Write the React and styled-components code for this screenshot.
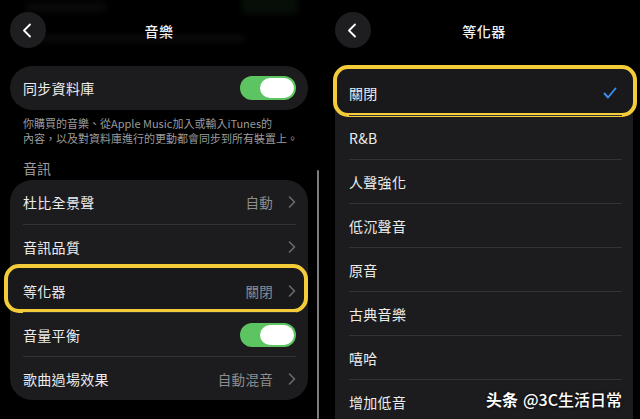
import React from 'react';
import styled, { createGlobalStyle } from 'styled-components';

const GlobalStyle = createGlobalStyle`
  html, body {
    margin: 0;
    padding: 0;
    background: #000;
  }
  body {
    font-family: "Noto Sans CJK TC", "Noto Sans", sans-serif;
    -webkit-font-smoothing: antialiased;
  }
`;

const Screen = styled.div`
  position: relative;
  display: flex;
  width: 640px;
  height: 419px;
  overflow: hidden;
  background: #000;
`;

const Panel = styled.section`
  position: relative;
  flex: none;
  width: 320px;
  box-sizing: border-box;
  padding: 12px ${({ $side }) => ($side === 'right' ? '7px 0 15px' : '12px 0 10px')};
  overflow: hidden;
`;

/* faint blurred content scrolled under the header */
const Ghost = styled.div`
  position: absolute;
  left: 0;
  right: 0;
  top: 0;
  height: 50px;
  filter: blur(3px);
  opacity: 0.3;
  pointer-events: none;
`;

const GhostBar = styled.div`
  position: absolute;
  left: ${({ $x }) => $x}px;
  top: ${({ $y }) => $y}px;
  width: ${({ $w }) => $w}px;
  height: ${({ $h }) => $h}px;
  border-radius: 3px;
  background: ${({ $c }) => $c || '#2a2a2a'};
`;

const Header = styled.header`
  position: relative;
  display: grid;
  grid-template-columns: 36px 1fr 36px;
  align-items: center;
  height: 36px;
  margin-bottom: ${({ $gap }) => $gap}px;
`;

const BackButton = styled.div`
  display: flex;
  align-items: center;
  justify-content: center;
  width: 36px;
  height: 36px;
  border-radius: 50%;
  background: #1e1e20;
  padding-right: 2px;
  box-sizing: border-box;
`;

const Title = styled.h1`
  margin: 0;
  text-align: center;
  font-size: 14px;
  font-weight: 500;
  color: #f2f2f2;
  letter-spacing: 0.5px;
  padding-top: 2px;
`;

const Card = styled.div`
  background: #1c1c1e;
  border-radius: 22px;
  padding-bottom: ${({ $pb }) => $pb || 0}px;
`;

const Row = styled.div`
  position: relative;
  display: flex;
  align-items: center;
  height: 44px;
  box-sizing: border-box;
  margin: ${({ $side }) => ($side === 'right' ? '0 11px 0 14px' : '0 12px 0 13px')};

  & + & {
    border-top: 1px solid #333335;
  }
`;

const Highlight = styled.div`
  position: absolute;
  top: ${({ $t }) => $t}px;
  bottom: ${({ $b }) => $b}px;
  left: ${({ $l }) => $l}px;
  right: ${({ $r }) => $r}px;
  border: 4px solid #f4cc3a;
  border-radius: 15px;
  background: #19191b;
`;

const Label = styled.span`
  position: relative;
  flex: 1;
  font-size: 14px;
  color: #ececec;
  letter-spacing: 0.3px;
`;

const Trail = styled.div`
  position: relative;
  display: flex;
  align-items: center;
  margin-right: ${({ $mr }) => $mr || 0}px;
`;

const Value = styled.span`
  font-size: 13.5px;
  color: #8d8d90;
  margin-right: 15px;
  letter-spacing: 0.3px;
`;

const Toggle = styled.div`
  display: flex;
  justify-content: flex-end;
  align-items: center;
  width: 56px;
  height: 24px;
  box-sizing: border-box;
  padding: 2px;
  border-radius: 12px;
  background: #5cc460;
`;

const Knob = styled.div`
  width: 34px;
  height: 20px;
  border-radius: 10px;
  background: #fff;
`;

const Footnote = styled.p`
  margin: 6px 0 0;
  padding: 0 13px;
  font-size: 11px;
  line-height: 15px;
  color: #9b9b9d;
  white-space: nowrap;
`;

const SectionTitle = styled.h2`
  margin: 12px 0 2px;
  padding: 0 13px;
  font-size: 14px;
  line-height: 20px;
  font-weight: 400;
  color: #9b9b9d;
`;

const ScrollBar = styled.div`
  position: absolute;
  right: 1px;
  top: 170px;
  bottom: 0;
  width: 2px;
  border-radius: 1px;
  background: #7c7c7e;
`;

const Watermark = styled.div`
  position: absolute;
  left: 486px;
  top: 387px;
  font-family: "Noto Sans CJK SC", "Noto Sans", sans-serif;
  font-size: 16px;
  font-weight: 700;
  color: #fff;
  white-space: nowrap;
  text-shadow: 0 0 3px rgba(0, 0, 0, 0.8);

  span {
    font-weight: 500;
    margin-left: 5px;
  }
`;

const BackIcon = () => (
  <svg width="10" height="15" viewBox="0 0 10 15">
    <path d="M8 1.5 L2 7.5 L8 13.5" fill="none" stroke="#fff" strokeWidth="1.8" strokeLinecap="round" strokeLinejoin="round" />
  </svg>
);

const Chevron = () => (
  <svg width="8" height="12" viewBox="0 0 8 12">
    <path d="M1.5 1 L6.5 6 L1.5 11" fill="none" stroke="#6b6b6e" strokeWidth="1.6" strokeLinecap="round" strokeLinejoin="round" />
  </svg>
);

const Check = () => (
  <svg width="14" height="12" viewBox="0 0 14 12">
    <path d="M1.5 6.5 L5 10.5 L12.5 1.5" fill="none" stroke="#3b8ff0" strokeWidth="1.9" strokeLinecap="round" strokeLinejoin="round" />
  </svg>
);

const Switch = () => (
  <Toggle>
    <Knob />
  </Toggle>
);

const audioRows = [
  { label: '杜比全景聲', value: '自動', chevron: true },
  { label: '音訊品質', chevron: true },
  { label: '等化器', value: '關閉', chevron: true, highlight: true },
  { label: '音量平衡', toggle: true },
  { label: '歌曲過場效果', value: '自動混音', chevron: true },
];

const eqPresets = ['關閉', 'R&B', '人聲強化', '低沉聲音', '原音', '古典音樂', '嘻哈', '增加低音'];

export default function App() {
  return (
    <>
      <GlobalStyle />
      <Screen>
        <Panel $side="left">
          <Ghost>
            <GhostBar $x={26} $y={2} $w={80} $h={10} $c="#222" />
            <GhostBar $x={40} $y={35} $w={205} $h={7} $c="#262626" />
            <GhostBar $x={242} $y={-8} $w={56} $h={22} $c="#17301a" />
          </Ghost>
          <Header $gap={18}>
            <BackButton><BackIcon /></BackButton>
            <Title>音樂</Title>
          </Header>
          <Card>
            <Row>
              <Label>同步資料庫</Label>
              <Trail><Switch /></Trail>
            </Row>
          </Card>
          <Footnote>
            你購買的音樂、從Apple Music加入或輸入iTunes的
            <br />
            內容，以及對資料庫進行的更動都會同步到所有裝置上。
          </Footnote>
          <SectionTitle>音訊</SectionTitle>
          <Card>
            {audioRows.map((row) => (
              <Row key={row.label}>
                {row.highlight && <Highlight $t={-5} $b={-1} $l={-19} $r={-12} />}
                <Label>{row.label}</Label>
                <Trail>
                  {row.value && <Value>{row.value}</Value>}
                  {row.chevron && <Chevron />}
                  {row.toggle && <Switch />}
                </Trail>
              </Row>
            ))}
          </Card>
          <ScrollBar />
        </Panel>

        <Panel $side="right">
          <Header $gap={23}>
            <BackButton><BackIcon /></BackButton>
            <Title>等化器</Title>
          </Header>
          <Card $pb={40}>
            {eqPresets.map((name, i) => (
              <Row key={name} $side="right">
                {i === 0 && <Highlight $t={-6} $b={-2} $l={-16} $r={-15} />}
                <Label>{name}</Label>
                {i === 0 && (
                  <Trail $mr={5}>
                    <Check />
                  </Trail>
                )}
              </Row>
            ))}
          </Card>
        </Panel>

        <Watermark>
          头条<span>@3C生活日常</span>
        </Watermark>
      </Screen>
    </>
  );
}
